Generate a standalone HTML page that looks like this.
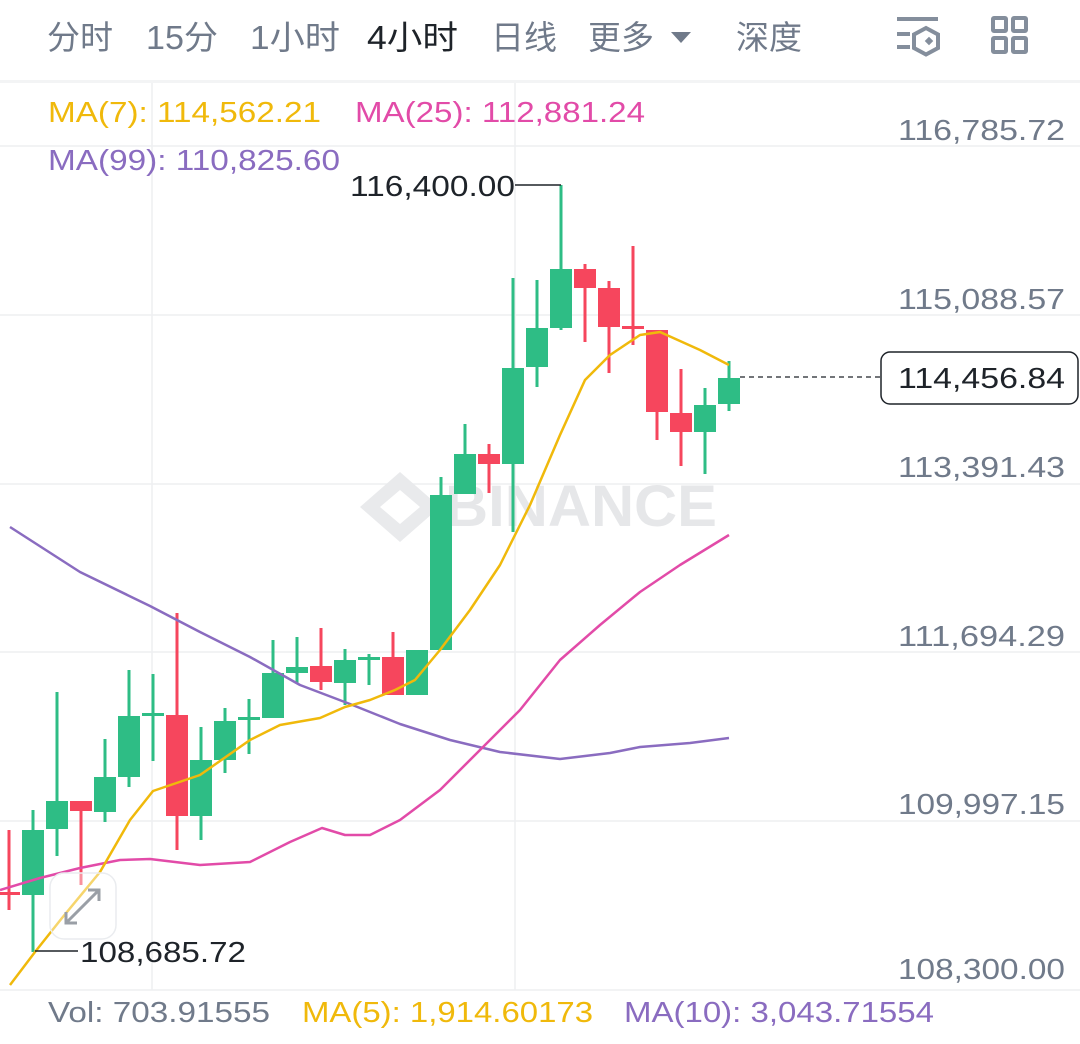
<!DOCTYPE html>
<html><head><meta charset="utf-8"><style>
html,body{margin:0;padding:0;background:#fff;width:1080px;height:1044px;overflow:hidden}
svg text{font-family:"Liberation Sans","Noto Sans CJK SC",sans-serif}
</style></head><body>
<svg width="1080" height="1044" viewBox="0 0 1080 1044" xmlns="http://www.w3.org/2000/svg">
<!-- header -->
<g font-size="33" fill="#707a8a">
<text x="47" y="49">分时</text>
<text x="146" y="49" textLength="72" lengthAdjust="spacingAndGlyphs">15分</text>
<text x="250" y="49" textLength="90" lengthAdjust="spacingAndGlyphs">1小时</text>
<text x="367" y="49" fill="#1e2329" textLength="91" lengthAdjust="spacingAndGlyphs">4小时</text>
<text x="491" y="49">日线</text>
<text x="588" y="49">更多</text>
<text x="736" y="49">深度</text>
</g>
<path d="M671 32 L691 32 L681 43 Z" fill="#707a8a"/>
<g stroke="#848e9c" stroke-width="4" fill="none">
<line x1="897" y1="19" x2="938" y2="19"/>
<line x1="897" y1="34" x2="910" y2="34"/>
<line x1="897" y1="47" x2="910" y2="47"/>
<path d="M926 28 L938 34.5 L938 48 L926 54.5 L914 48 L914 34.5 Z"/>
<rect x="993" y="18" width="13" height="13" rx="1"/>
<rect x="1013" y="18" width="13" height="13" rx="1"/>
<rect x="993" y="38" width="13" height="14" rx="1"/>
<rect x="1013" y="38" width="13" height="14" rx="1"/>
</g>
<rect x="926" y="38" width="6" height="6" fill="#848e9c" transform="rotate(45 929 41)"/>
<rect x="0" y="80" width="1080" height="3" fill="#f3f4f5"/>
<!-- grid -->
<g stroke="#eeeff1" stroke-width="1.5">
<line x1="0" y1="146" x2="1080" y2="146"/>
<line x1="0" y1="315" x2="1080" y2="315"/>
<line x1="0" y1="484" x2="1080" y2="484"/>
<line x1="0" y1="652" x2="1080" y2="652"/>
<line x1="0" y1="821" x2="1080" y2="821"/>
<line x1="0" y1="990" x2="1080" y2="990"/>
<line x1="152" y1="83" x2="152" y2="990"/>
<line x1="515" y1="83" x2="515" y2="990"/>
</g>
<!-- watermark -->
<g fill="#e9eaec">
<path d="M400 472 L440 507 L400 542 L360 507 Z M400 490 L420 507 L400 524 L380 507 Z" fill-rule="evenodd"/>
<text x="445" y="526" font-size="58" font-weight="bold" fill="#e6e7e9" textLength="272" lengthAdjust="spacingAndGlyphs">BINANCE</text>
</g>
<!-- price labels -->
<g font-size="29" fill="#707a8a">
<text x="898" y="140" textLength="167" lengthAdjust="spacingAndGlyphs">116,785.72</text>
<text x="898" y="309" textLength="167" lengthAdjust="spacingAndGlyphs">115,088.57</text>
<text x="898" y="477" textLength="167" lengthAdjust="spacingAndGlyphs">113,391.43</text>
<text x="898" y="646" textLength="167" lengthAdjust="spacingAndGlyphs">111,694.29</text>
<text x="898" y="814" textLength="167" lengthAdjust="spacingAndGlyphs">109,997.15</text>
<text x="898" y="979" textLength="167" lengthAdjust="spacingAndGlyphs">108,300.00</text>
</g>
<!-- legends -->
<g font-size="29">
<text x="48" y="122" fill="#f0b90b" textLength="273" lengthAdjust="spacingAndGlyphs">MA(7): 114,562.21</text>
<text x="355" y="122" fill="#e24ba8" textLength="290" lengthAdjust="spacingAndGlyphs">MA(25): 112,881.24</text>
<text x="48" y="170" fill="#8a6cc0" textLength="292" lengthAdjust="spacingAndGlyphs">MA(99): 110,825.60</text>
<text x="48" y="1022" fill="#707a8a" textLength="222" lengthAdjust="spacingAndGlyphs">Vol: 703.91555</text>
<text x="302" y="1022" fill="#f0b90b" textLength="291" lengthAdjust="spacingAndGlyphs">MA(5): 1,914.60173</text>
<text x="624" y="1022" fill="#8a6cc0" textLength="310" lengthAdjust="spacingAndGlyphs">MA(10): 3,043.71554</text>
</g>
<!-- candles -->
<g>
<g fill="#2ebd85" stroke="#2ebd85" stroke-width="3">
<line x1="33" y1="810" x2="33" y2="952"/><rect x="22" y="830" width="22" height="65" stroke="none"/>
<line x1="57" y1="692" x2="57" y2="856"/><rect x="46" y="801" width="22" height="28" stroke="none"/>
<line x1="105" y1="739" x2="105" y2="822"/><rect x="94" y="777" width="22" height="35" stroke="none"/>
<line x1="129" y1="670" x2="129" y2="787"/><rect x="118" y="716" width="22" height="61" stroke="none"/>
<line x1="153" y1="674" x2="153" y2="761"/><rect x="142" y="713" width="22" height="3" stroke="none"/>
<line x1="201" y1="727" x2="201" y2="840"/><rect x="190" y="760" width="22" height="56" stroke="none"/>
<line x1="225" y1="708" x2="225" y2="773"/><rect x="214" y="721" width="22" height="39" stroke="none"/>
<line x1="249" y1="699" x2="249" y2="754"/><rect x="238" y="717" width="22" height="3" stroke="none"/>
<line x1="273" y1="640" x2="273" y2="718"/><rect x="262" y="673" width="22" height="45" stroke="none"/>
<line x1="297" y1="637" x2="297" y2="683"/><rect x="286" y="667" width="22" height="6" stroke="none"/>
<line x1="345" y1="649" x2="345" y2="705"/><rect x="334" y="660" width="22" height="23" stroke="none"/>
<line x1="369" y1="654" x2="369" y2="685"/><rect x="358" y="657" width="22" height="3" stroke="none"/>
<line x1="417" y1="650" x2="417" y2="695"/><rect x="406" y="650" width="22" height="45" stroke="none"/>
<line x1="441" y1="477" x2="441" y2="650"/><rect x="430" y="495" width="22" height="155" stroke="none"/>
<line x1="465" y1="424" x2="465" y2="494"/><rect x="454" y="454" width="22" height="40" stroke="none"/>
<line x1="513" y1="278" x2="513" y2="532"/><rect x="502" y="368" width="22" height="96" stroke="none"/>
<line x1="537" y1="280" x2="537" y2="387"/><rect x="526" y="328" width="22" height="39" stroke="none"/>
<line x1="561" y1="185" x2="561" y2="330"/><rect x="550" y="269" width="22" height="59" stroke="none"/>
<line x1="705" y1="388" x2="705" y2="474"/><rect x="694" y="405" width="22" height="27" stroke="none"/>
<line x1="729" y1="361" x2="729" y2="411"/><rect x="718" y="378" width="22" height="26" stroke="none"/>
</g>
<g fill="#f6465d" stroke="#f6465d" stroke-width="3">
<line x1="9" y1="830" x2="9" y2="910"/><rect x="0" y="892" width="20" height="3" stroke="none"/>
<line x1="81" y1="801" x2="81" y2="885"/><rect x="70" y="801" width="22" height="10" stroke="none"/>
<line x1="177" y1="613" x2="177" y2="850"/><rect x="166" y="715" width="22" height="101" stroke="none"/>
<line x1="321" y1="628" x2="321" y2="690"/><rect x="310" y="666" width="22" height="16" stroke="none"/>
<line x1="393" y1="632" x2="393" y2="695"/><rect x="382" y="657" width="22" height="38" stroke="none"/>
<line x1="489" y1="444" x2="489" y2="493"/><rect x="478" y="454" width="22" height="10" stroke="none"/>
<line x1="585" y1="264" x2="585" y2="342"/><rect x="574" y="269" width="22" height="19" stroke="none"/>
<line x1="609" y1="281" x2="609" y2="373"/><rect x="598" y="288" width="22" height="39" stroke="none"/>
<line x1="633" y1="246" x2="633" y2="345"/><rect x="622" y="326" width="22" height="3" stroke="none"/>
<line x1="657" y1="330" x2="657" y2="440"/><rect x="646" y="330" width="22" height="82" stroke="none"/>
<line x1="681" y1="369" x2="681" y2="466"/><rect x="670" y="413" width="22" height="19" stroke="none"/>
</g>
</g>
<!-- MAs -->
<g fill="none" stroke-width="2.5" stroke-linejoin="round">
<polyline stroke="#8a6cc0" points="10,527 80,572 150,606 200,632 250,657 300,685 350,704 400,724 450,740 500,752 560,759 610,753 640,747 690,743 729,738"/>
<polyline stroke="#e24ba8" points="0,890 40,878 80,868 120,860 150,859 200,865 250,862 290,842 322,828 345,835 370,835 400,820 440,790 480,750 520,710 560,660 600,625 640,592 680,565 729,535"/>
<polyline stroke="#f0b90b" points="10,985 35,952 62,918 100,872 130,820 153,791 200,775 250,740 280,725 320,718 345,707 370,700 395,690 415,680 440,650 470,610 500,565 530,505 560,435 585,380 610,355 640,335 660,332 700,350 729,365"/>
</g>
<!-- high/low markers -->
<g stroke="#1e2329" stroke-width="1.5">
<line x1="515" y1="185" x2="561" y2="185"/>
<line x1="35" y1="951" x2="78" y2="951"/>
</g>
<text x="350" y="196" font-size="29" fill="#1e2329" textLength="165" lengthAdjust="spacingAndGlyphs">116,400.00</text>
<text x="80" y="962" font-size="29" fill="#1e2329" textLength="166" lengthAdjust="spacingAndGlyphs">108,685.72</text>
<!-- expand button -->
<rect x="50" y="873" width="66" height="66" rx="14" fill="rgba(255,255,255,0.4)" stroke="#eaecef" stroke-width="1.5"/>
<g stroke="#9a9fa6" stroke-width="3" fill="none">
<line x1="66" y1="923" x2="99" y2="890"/>
<polyline points="88,890 99,890 99,901"/>
<polyline points="66,912 66,923 77,923"/>
</g>
<!-- current price -->
<line x1="740" y1="377" x2="880" y2="377" stroke="#1e2329" stroke-width="1.3" stroke-dasharray="5,4"/>
<rect x="881" y="352" width="197" height="52" rx="9" fill="#fff" stroke="#1e2329" stroke-width="1.5"/>
<text x="898" y="388" font-size="29" fill="#1e2329" textLength="167" lengthAdjust="spacingAndGlyphs">114,456.84</text>
</svg>
</body></html>
